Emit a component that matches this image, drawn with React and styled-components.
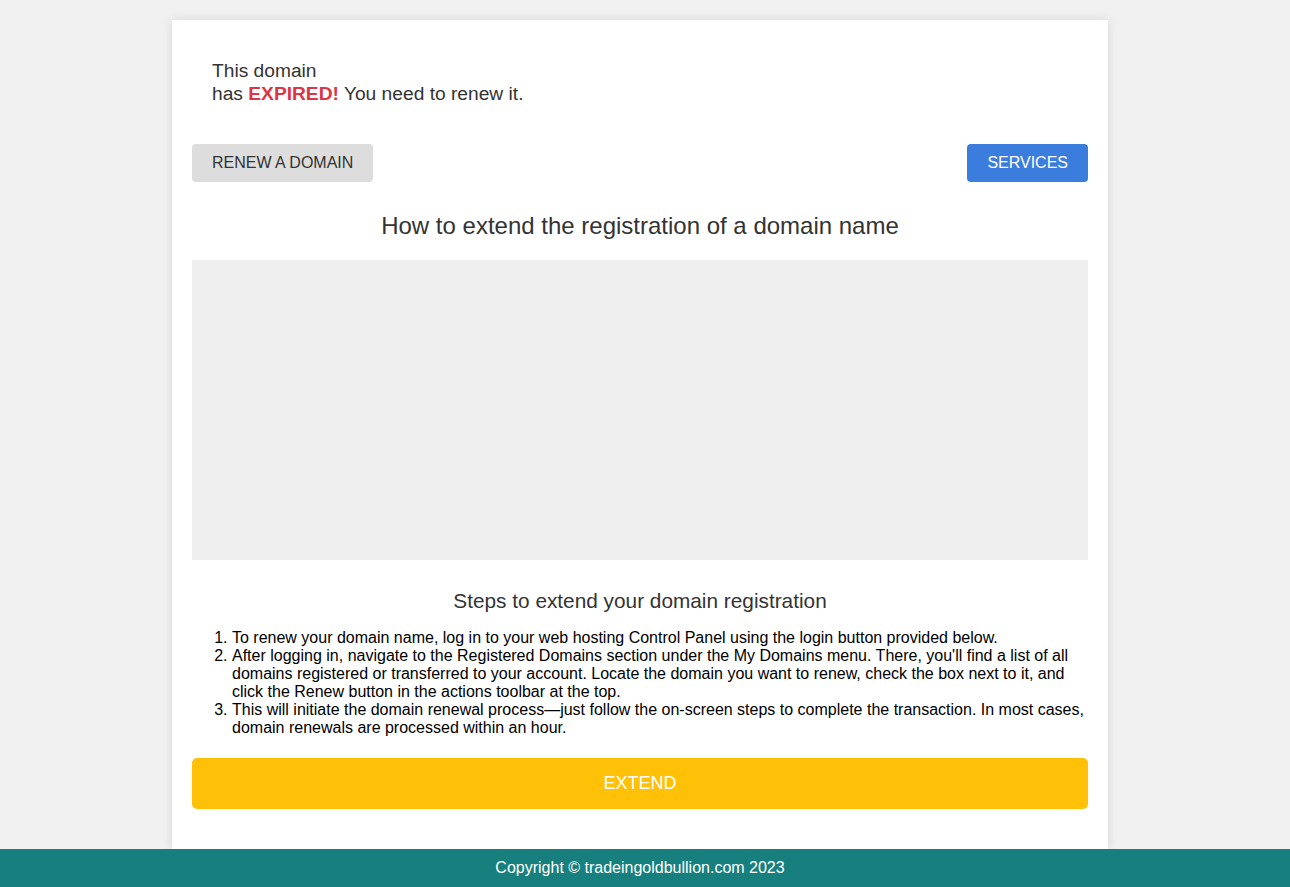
import React from 'react';
import styled, { createGlobalStyle } from 'styled-components';

const GlobalStyle = createGlobalStyle`
  body {
    margin: 0;
    background-color: #f0f0f0;
    font-family: "Liberation Sans", Arial, Helvetica, sans-serif;
    color: #333;
  }
`;

const Page = styled.div`
  padding: 20px 10px 38px 0;
`;

const Container = styled.main`
  width: 896px;
  margin: 0 auto;
  padding: 20px 20px 40px 20px;
  background-color: #fff;
  box-shadow: 0 0 10px rgba(0, 0, 0, 0.1);
`;

const Notice = styled.div`
  padding: 19px 20px 21px 20px;
  font-size: 19.2px;
  line-height: 23px;
  color: #333;
`;

const Expired = styled.strong`
  color: #dc3545;
`;

const Toolbar = styled.div`
  display: flex;
  justify-content: space-between;
  margin-top: 18px;
`;

const Button = styled.button`
  height: 38px;
  padding: 0 20px;
  border: none;
  border-radius: 4px;
  font-family: inherit;
  font-size: 16px;
  cursor: pointer;
  background-color: ${p => (p.$primary ? '#3b7ddd' : '#dddddd')};
  color: ${p => (p.$primary ? '#fff' : '#333')};
`;

const Title = styled.h2`
  margin: 30px 0 20px 0;
  text-align: center;
  font-size: 24px;
  font-weight: normal;
  line-height: 28px;
  color: #333;
`;

const VideoBox = styled.div`
  height: 300px;
  background-color: #efefef;
`;

const SubTitle = styled.h3`
  margin: 29px 0 16px 0;
  text-align: center;
  font-size: 20.8px;
  font-weight: normal;
  line-height: 24px;
  color: #333;
`;

const Steps = styled.ol`
  margin: 0;
  padding-left: 40px;
  font-size: 16px;
  line-height: 18px;
  color: #000;
`;

const ExtendButton = styled.button`
  display: block;
  width: 100%;
  height: 51px;
  margin-top: 21px;
  border: none;
  border-radius: 5px;
  background-color: #ffc107;
  color: #fff;
  font-family: inherit;
  font-size: 18px;
  cursor: pointer;
`;

const Footer = styled.footer`
  position: fixed;
  left: 0;
  right: 0;
  bottom: 0;
  height: 38px;
  padding-right: 10px;
  display: flex;
  align-items: center;
  justify-content: center;
  background-color: #17807e;
  color: #fff;
  font-size: 16px;
`;

const steps = [
  'To renew your domain name, log in to your web hosting Control Panel using the login button provided below.',
  "After logging in, navigate to the Registered Domains section under the My Domains menu. There, you'll find a list of all domains registered or transferred to your account. Locate the domain you want to renew, check the box next to it, and click the Renew button in the actions toolbar at the top.",
  'This will initiate the domain renewal process\u2014just follow the on-screen steps to complete the transaction. In most cases, domain renewals are processed within an hour.',
];

export default function App() {
  return (
    <>
      <GlobalStyle />
      <Page>
        <Container>
          <Notice>
            This domain
            <br />
            has <Expired>EXPIRED!</Expired> You need to renew it.
          </Notice>
          <Toolbar>
            <Button>RENEW A DOMAIN</Button>
            <Button $primary>SERVICES</Button>
          </Toolbar>
          <Title>How to extend the registration of a domain name</Title>
          <VideoBox />
          <SubTitle>Steps to extend your domain registration</SubTitle>
          <Steps>
            {steps.map((text, i) => (
              <li key={i}>{text}</li>
            ))}
          </Steps>
          <ExtendButton>EXTEND</ExtendButton>
        </Container>
      </Page>
      <Footer>Copyright © tradeingoldbullion.com 2023</Footer>
    </>
  );
}
